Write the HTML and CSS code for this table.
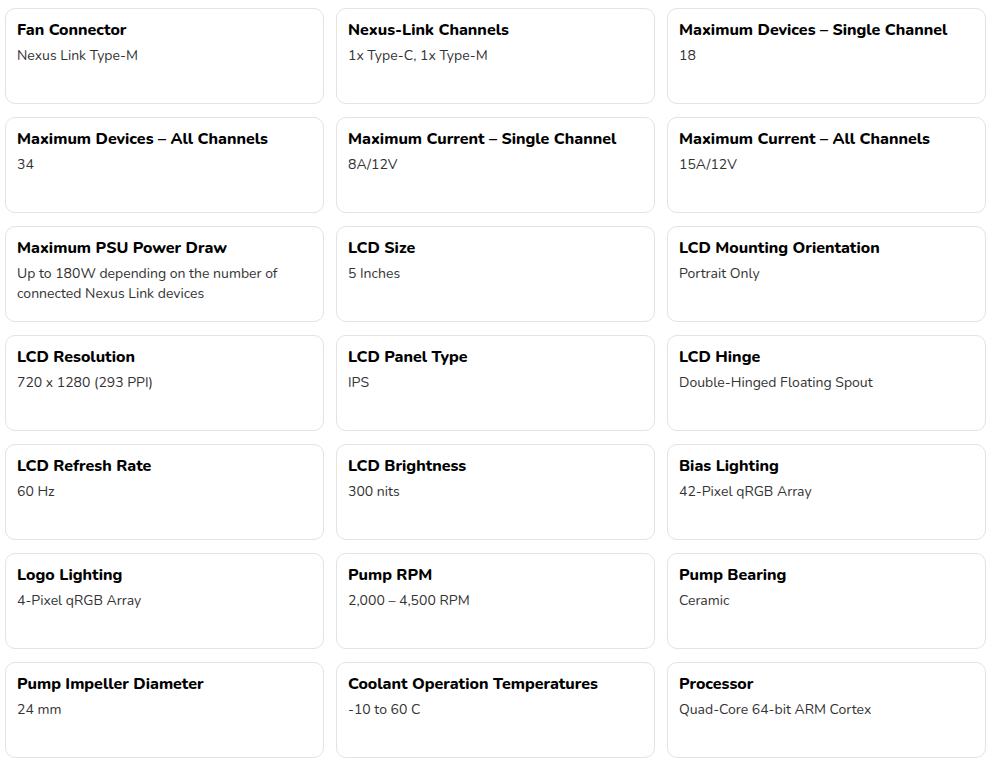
FILE: index.html
```html
<!DOCTYPE html>
<html lang="en">
<head>
<meta charset="utf-8">
<title>Specifications</title>
<link rel="stylesheet" href="styles.css">
</head>
<body>
<div class="specs">
  <div class="card"><div class="title">Fan Connector</div><div class="value">Nexus Link Type-M</div></div>
  <div class="card"><div class="title">Nexus-Link Channels</div><div class="value">1x Type-C, 1x Type-M</div></div>
  <div class="card"><div class="title">Maximum Devices – Single Channel</div><div class="value">18</div></div>
  <div class="card"><div class="title">Maximum Devices – All Channels</div><div class="value">34</div></div>
  <div class="card"><div class="title">Maximum Current – Single Channel</div><div class="value">8A/12V</div></div>
  <div class="card"><div class="title">Maximum Current – All Channels</div><div class="value">15A/12V</div></div>
  <div class="card"><div class="title">Maximum PSU Power Draw</div><div class="value">Up to 180W depending on the number of connected Nexus Link devices</div></div>
  <div class="card"><div class="title">LCD Size</div><div class="value">5 Inches</div></div>
  <div class="card"><div class="title">LCD Mounting Orientation</div><div class="value">Portrait Only</div></div>
  <div class="card"><div class="title">LCD Resolution</div><div class="value">720 x 1280 (293 PPI)</div></div>
  <div class="card"><div class="title">LCD Panel Type</div><div class="value">IPS</div></div>
  <div class="card"><div class="title">LCD Hinge</div><div class="value">Double-Hinged Floating Spout</div></div>
  <div class="card"><div class="title">LCD Refresh Rate</div><div class="value">60 Hz</div></div>
  <div class="card"><div class="title">LCD Brightness</div><div class="value">300 nits</div></div>
  <div class="card"><div class="title">Bias Lighting</div><div class="value">42-Pixel qRGB Array</div></div>
  <div class="card"><div class="title">Logo Lighting</div><div class="value">4-Pixel qRGB Array</div></div>
  <div class="card"><div class="title">Pump RPM</div><div class="value">2,000 – 4,500 RPM</div></div>
  <div class="card"><div class="title">Pump Bearing</div><div class="value">Ceramic</div></div>
  <div class="card"><div class="title">Pump Impeller Diameter</div><div class="value">24 mm</div></div>
  <div class="card"><div class="title">Coolant Operation Temperatures</div><div class="value">-10 to 60 C</div></div>
  <div class="card"><div class="title">Processor</div><div class="value">Quad-Core 64-bit ARM Cortex</div></div>
</div>
</body>
</html>
```

FILE: styles.css
```css
html, body {
  margin: 0;
  padding: 0;
  background: #ffffff;
}
body {
  font-family: "Nunito", "Lato", "Noto Sans", sans-serif;
}
.specs {
  display: grid;
  grid-template-columns: repeat(3, 319px);
  grid-auto-rows: 96px;
  column-gap: 12px;
  row-gap: 13px;
  padding: 8px 0 0 5px;
}
.card {
  box-sizing: border-box;
  border: 1px solid #e3e3e3;
  border-radius: 10px;
  padding: 10px 11px 0 11px;
  background: #fff;
}
.title {
  font-size: 16px;
  font-weight: 800;
  line-height: 22px;
  color: #000;
}
.value {
  margin-top: 5px;
  font-size: 14px;
  line-height: 20px;
  color: #333;
}
```
